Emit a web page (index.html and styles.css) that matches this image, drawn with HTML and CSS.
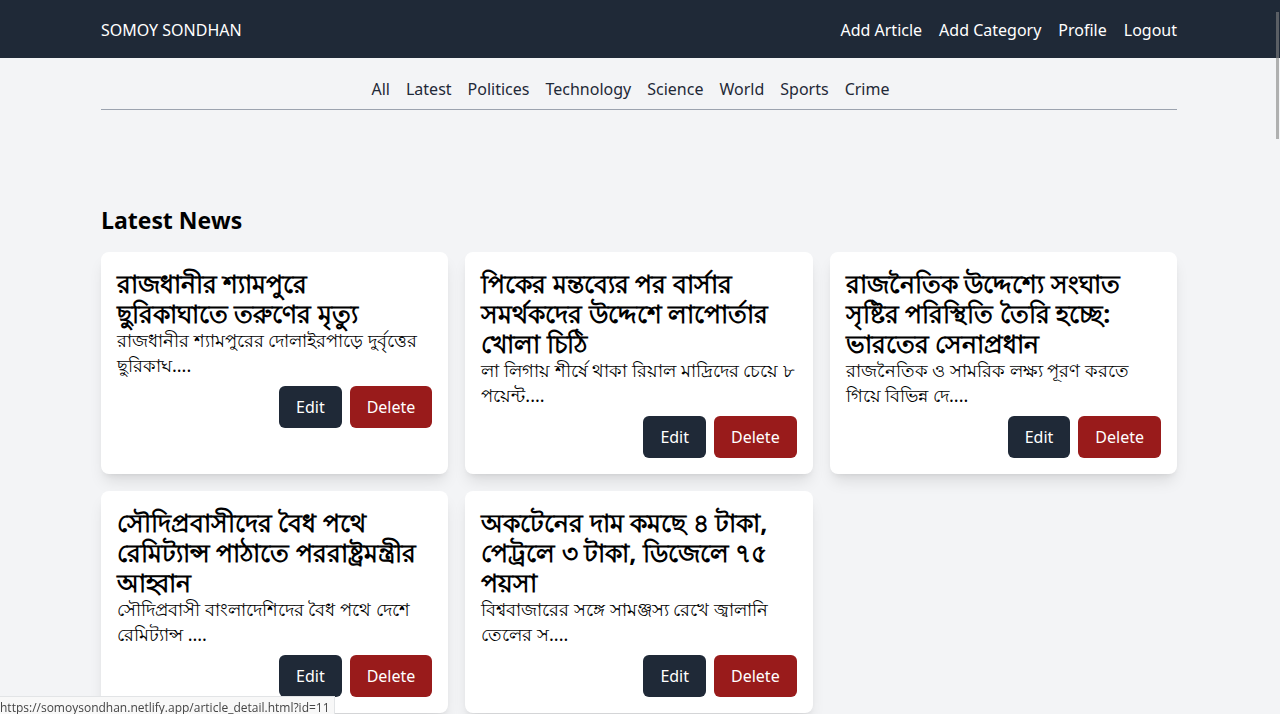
FILE: index.html
```html
<!DOCTYPE html>
<html lang="bn">
<head>
<meta charset="utf-8">
<meta name="viewport" content="width=device-width, initial-scale=1">
<title>Somoy Sondhan</title>
<link rel="stylesheet" href="styles.css">
</head>
<body>
<header class="topbar">
  <nav class="container topbar-inner">
    <a class="brand" href="#">SOMOY SONDHAN</a>
    <div class="links">
      <a href="#">Add Article</a>
      <a href="#">Add Category</a>
      <a href="#">Profile</a>
      <a href="#">Logout</a>
    </div>
  </nav>
</header>
<main class="page">
  <div class="container">
  <nav class="categories">
    <a href="#">All</a>
    <a href="#">Latest</a>
    <a href="#">Politices</a>
    <a href="#">Technology</a>
    <a href="#">Science</a>
    <a href="#">World</a>
    <a href="#">Sports</a>
    <a href="#">Crime</a>
  </nav>
  <h1 class="section-title">Latest News</h1>
  <section class="grid">
    <article class="card">
      <h2><a href="#">রাজধানীর শ্যামপুরে ছুরিকাঘাতে তরুণের মৃত্যু</a></h2>
      <p>রাজধানীর শ্যামপুরের দোলাইরপাড়ে দুর্বৃত্তের ছুরিকাঘ....</p>
      <div class="actions"><button class="btn edit">Edit</button><button class="btn delete">Delete</button></div>
    </article>
    <article class="card">
      <h2><a href="#">পিকের মন্তব্যের পর বার্সার সমর্থকদের উদ্দেশে লাপোর্তার খোলা চিঠি</a></h2>
      <p>লা লিগায় শীর্ষে থাকা রিয়াল মাদ্রিদের চেয়ে ৮ পয়েন্ট....</p>
      <div class="actions"><button class="btn edit">Edit</button><button class="btn delete">Delete</button></div>
    </article>
    <article class="card">
      <h2><a href="#">রাজনৈতিক উদ্দেশ্যে সংঘাত সৃষ্টির পরিস্থিতি তৈরি হচ্ছে: ভারতের সেনাপ্রধান</a></h2>
      <p>রাজনৈতিক ও সামরিক লক্ষ্য পূরণ করতে গিয়ে বিভিন্ন দে....</p>
      <div class="actions"><button class="btn edit">Edit</button><button class="btn delete">Delete</button></div>
    </article>
    <article class="card">
      <h2><a href="#">সৌদিপ্রবাসীদের বৈধ পথে রেমিট্যান্স পাঠাতে পররাষ্ট্রমন্ত্রীর আহ্বান</a></h2>
      <p>সৌদিপ্রবাসী বাংলাদেশিদের বৈধ পথে দেশে রেমিট্যান্স ....</p>
      <div class="actions"><button class="btn edit">Edit</button><button class="btn delete">Delete</button></div>
    </article>
    <article class="card">
      <h2><a href="#">অকটেনের দাম কমছে ৪ টাকা, পেট্রলে ৩ টাকা, ডিজেলে ৭৫ পয়সা</a></h2>
      <p>বিশ্ববাজারের সঙ্গে সামঞ্জস্য রেখে জ্বালানি তেলের স....</p>
      <div class="actions"><button class="btn edit">Edit</button><button class="btn delete">Delete</button></div>
    </article>
  </section>
  </div>
</main>
<div class="scroll-thumb"></div>
<div class="status">https://somoysondhan.netlify.app/article_detail.html?id=11</div>
</body>
</html>
```

FILE: styles.css
```css
* { box-sizing: border-box; margin: 0; padding: 0; }
html { height: 100%; overflow: hidden; }
body {
  height: 100%;
  overflow: hidden;
  background: #f3f4f6;
  color: #000;
  font: 16px/25px "Noto Sans", "Open Sans", sans-serif;
}
a { color: inherit; text-decoration: none; }
.container { width: 84.2%; max-width: 1280px; margin: 0 auto; }
.topbar, .page { padding-right: 2px; }
.topbar { background: #1f2937; color: #fff; }
.topbar-inner { display: flex; justify-content: space-between; align-items: center; padding: 18px 0 15px; }
.links, .categories { display: flex; gap: 17px; }
.categories {
  justify-content: center;
  gap: 16px;
  padding: 19px 17px 7px 0;
  border-bottom: 1px solid #9ca3af;
  color: #1f2937;
}
.section-title { margin: 93px 0 15px; font-size: 23px; line-height: 34px; font-weight: 700; font-family: "Open Sans", sans-serif; }
.grid { display: grid; grid-template-columns: repeat(3, 1fr); gap: 17px; }
.card {
  background: #fff;
  border-radius: 8px;
  padding: 16px;
  box-shadow: 0 10px 15px -3px rgba(0,0,0,.1), 0 4px 6px -4px rgba(0,0,0,.1);
}
.card h2 { padding-right: 8px; font-size: 25px; line-height: 30px; font-weight: 700; }
.card p { font-size: 18px; line-height: 25px; }
.actions { display: flex; justify-content: flex-end; gap: 8px; margin-top: 8px; }
.btn { border: 0; border-radius: 6px; padding: 9px 17px 8px; color: #fff; font: inherit; cursor: pointer; }
.edit { background: #1f2937; }
.delete { background: #991b1b; }
.scroll-thumb { position: fixed; top: 12px; right: 1px; width: 3px; height: 127px; background: rgba(130,130,130,.6); }
.status {
  position: fixed; left: 0; bottom: 0;
  height: 18px; padding-right: 4px;
  border-top: 1px solid #e2e4e6; border-right: 1px solid #e2e4e6;
  background: #f8f8f8; color: #444;
  font: 12px/21px "Open Sans", sans-serif;
}
```
